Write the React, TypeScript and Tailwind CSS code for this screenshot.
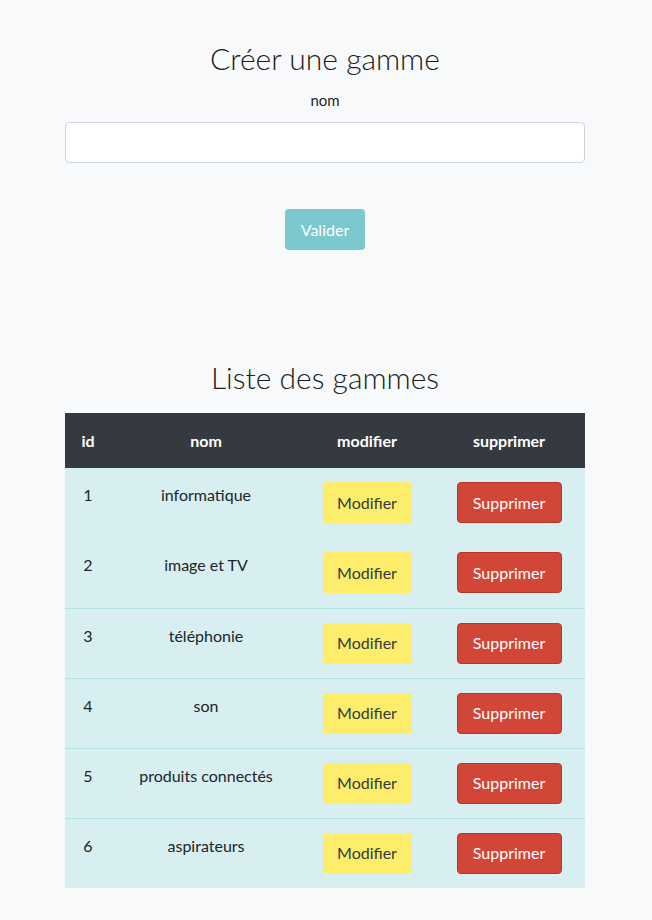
import React from "react";

const gammes = [
    { id: 1, nom: "informatique" },
    { id: 2, nom: "image et TV" },
    { id: 3, nom: "téléphonie" },
    { id: 4, nom: "son" },
    { id: 5, nom: "produits connectés" },
    { id: 6, nom: "aspirateurs" },
];

export default function App() {
    return (
        <div className="min-h-screen bg-[#f8f9fa] text-[#212529] font-['Lato','Open_Sans',sans-serif]">
            <div className="ml-[65px] w-[520px] pt-[41px]">
                {/* formulaire */}
                <form className="flex flex-col items-center" onSubmit={(e) => e.preventDefault()}>
                    <h1 className="text-[30px] leading-[34px] font-light text-[#1a1d20]">Créer une gamme</h1>
                    <label htmlFor="nom" className="mt-[14px] text-[15px] leading-[22px]">nom</label>
                    <input
                        id="nom"
                        type="text"
                        className="mt-[11px] w-full h-[41px] rounded-[4px] border border-[#ced4da] bg-white px-3"
                    />
                    <button
                        type="submit"
                        className="mt-[46px] w-[80px] h-[41px] rounded-[4px] bg-[#7cc8cf] text-white text-[16px]"
                    >
                        Valider
                    </button>
                </form>

                {/* liste */}
                <h2 className="mt-[110px] text-center text-[30px] leading-[34px] font-light text-[#1a1d20]">Liste des gammes</h2>
                <table className="mt-[19px] w-full border-collapse text-[16px]">
                    <thead>
                        <tr className="bg-[#343a40] text-white h-[55px]">
                            <th className="w-[46px] font-bold">id</th>
                            <th className="w-[190px] font-bold">nom</th>
                            <th className="w-[132px] font-bold">modifier</th>
                            <th className="font-bold">supprimer</th>
                        </tr>
                    </thead>
                    <tbody>
                        {gammes.map((g, i) => (
                            <tr
                                key={g.id}
                                className={`bg-[#d7eff1] h-[70px] ${i > 1 ? "border-t border-[#b6e2e7]" : ""}`}
                            >
                                <td className="align-top pt-[15px] text-center">{g.id}</td>
                                <td className="align-top pt-[15px] text-center">{g.nom}</td>
                                <td className="align-top pt-[14px] text-center">
                                    <button className="w-[89px] h-[41px] rounded-[4px] bg-[#feed6b] text-[#343a40] text-[16px]">
                                        Modifier
                                    </button>
                                </td>
                                <td className="align-top pt-[14px] text-center">
                                    <button className="w-[105px] h-[41px] rounded-[4px] bg-[#d24637] border border-[#b8342a] text-white text-[16px]">
                                        Supprimer
                                    </button>
                                </td>
                            </tr>
                        ))}
                    </tbody>
                </table>
            </div>
        </div>
    );
}
